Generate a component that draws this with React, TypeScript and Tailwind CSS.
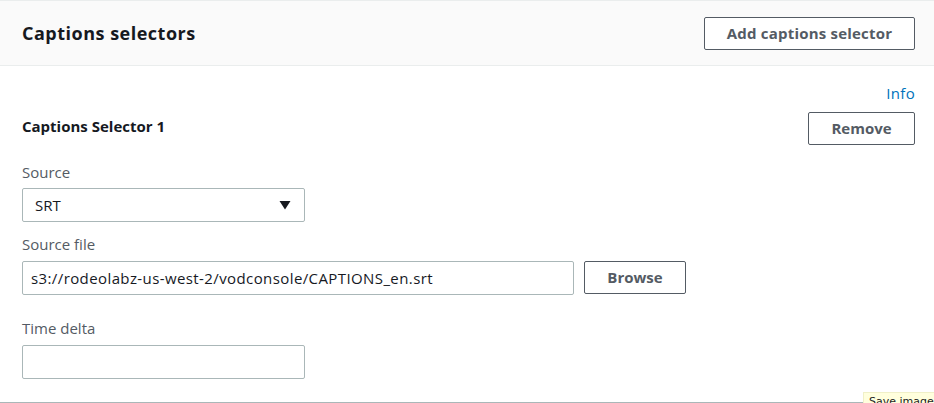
import React from "react";

export default function App() {
  return (
    <div
      className="relative w-[934px] h-[403px] overflow-hidden bg-white text-[#16191f]"
      style={{ fontFamily: '"Open Sans", "Noto Sans", Arial, sans-serif' }}
    >
      <div className="border-t border-[#eaeded] bg-[#fafafa] border-b h-[66px] flex items-center justify-between pl-[22px] pr-[19px]">
        <h2 className="text-[18px] font-bold leading-none tracking-[0.5px]">Captions selectors</h2>
        <button className="h-[33px] w-[211px] border border-[#545b64] bg-white text-[15px] font-bold tracking-[0.2px] text-[#545b64] rounded-[2px]">
          Add captions selector
        </button>
      </div>
      <div className="pl-[22px] pr-[19px]">
        <div className="flex justify-end pt-[17px] h-[44px]">
          <span className="text-[15px] tracking-[0.3px] text-[#0073bb] leading-[20px]">Info</span>
        </div>
        <div className="flex items-center justify-between h-[33px] mt-[2px]">
          <span className="text-[15px] font-bold pb-[4px]">Captions Selector 1</span>
          <button className="h-[33px] w-[107px] border border-[#545b64] bg-white text-[15px] font-bold text-[#545b64] rounded-[2px]">
            Remove
          </button>
        </div>
        <div className="mt-[17px] text-[15px] text-[#545b64] leading-[20px]">Source</div>
        <div className="mt-[6px] h-[34px] w-[283px] border border-[#aab7b8] rounded-[2px] flex items-center justify-between pl-[12px] pr-[13px]">
          <span className="text-[15px] text-[#16191f]">SRT</span>
          <svg width="12" height="10" viewBox="0 0 12 10">
            <path d="M0.5 1 L11.5 1 L6 9.5 Z" fill="#16191f" />
          </svg>
        </div>
        <div className="mt-[12px] text-[15px] text-[#545b64] leading-[20px]">Source file</div>
        <div className="mt-[7px] flex gap-[10px]">
          <div className="h-[34px] w-[552px] border border-[#aab7b8] rounded-[2px] flex items-center pl-[8px]">
            <span className="text-[15px] tracking-[0.4px] text-[#16191f] whitespace-nowrap">
              s3://rodeolabz-us-west-2/vodconsole/CAPTIONS_en.srt
            </span>
          </div>
          <button className="h-[33px] w-[102px] border border-[#545b64] bg-white text-[15px] font-bold text-[#545b64] rounded-[2px]">
            Browse
          </button>
        </div>
        <div className="mt-[23px] text-[15px] text-[#545b64] leading-[20px]">Time delta</div>
        <div className="mt-[7px] h-[34px] w-[283px] border border-[#aab7b8] rounded-[2px]"></div>
      </div>
      <div className="absolute left-0 right-0 top-[402px] border-t border-[#aab7b8]"></div>
      <div
        className="absolute left-[863px] top-[392px] h-[20px] pl-[5px] pr-[2px] whitespace-nowrap bg-[#ffffdd] border-l border-t border-[#f0f0c8] text-[11px] leading-[18px] text-[#222]"
        style={{ fontFamily: '"DejaVu Sans", sans-serif' }}
      >
        Save image
      </div>
    </div>
  );
}
